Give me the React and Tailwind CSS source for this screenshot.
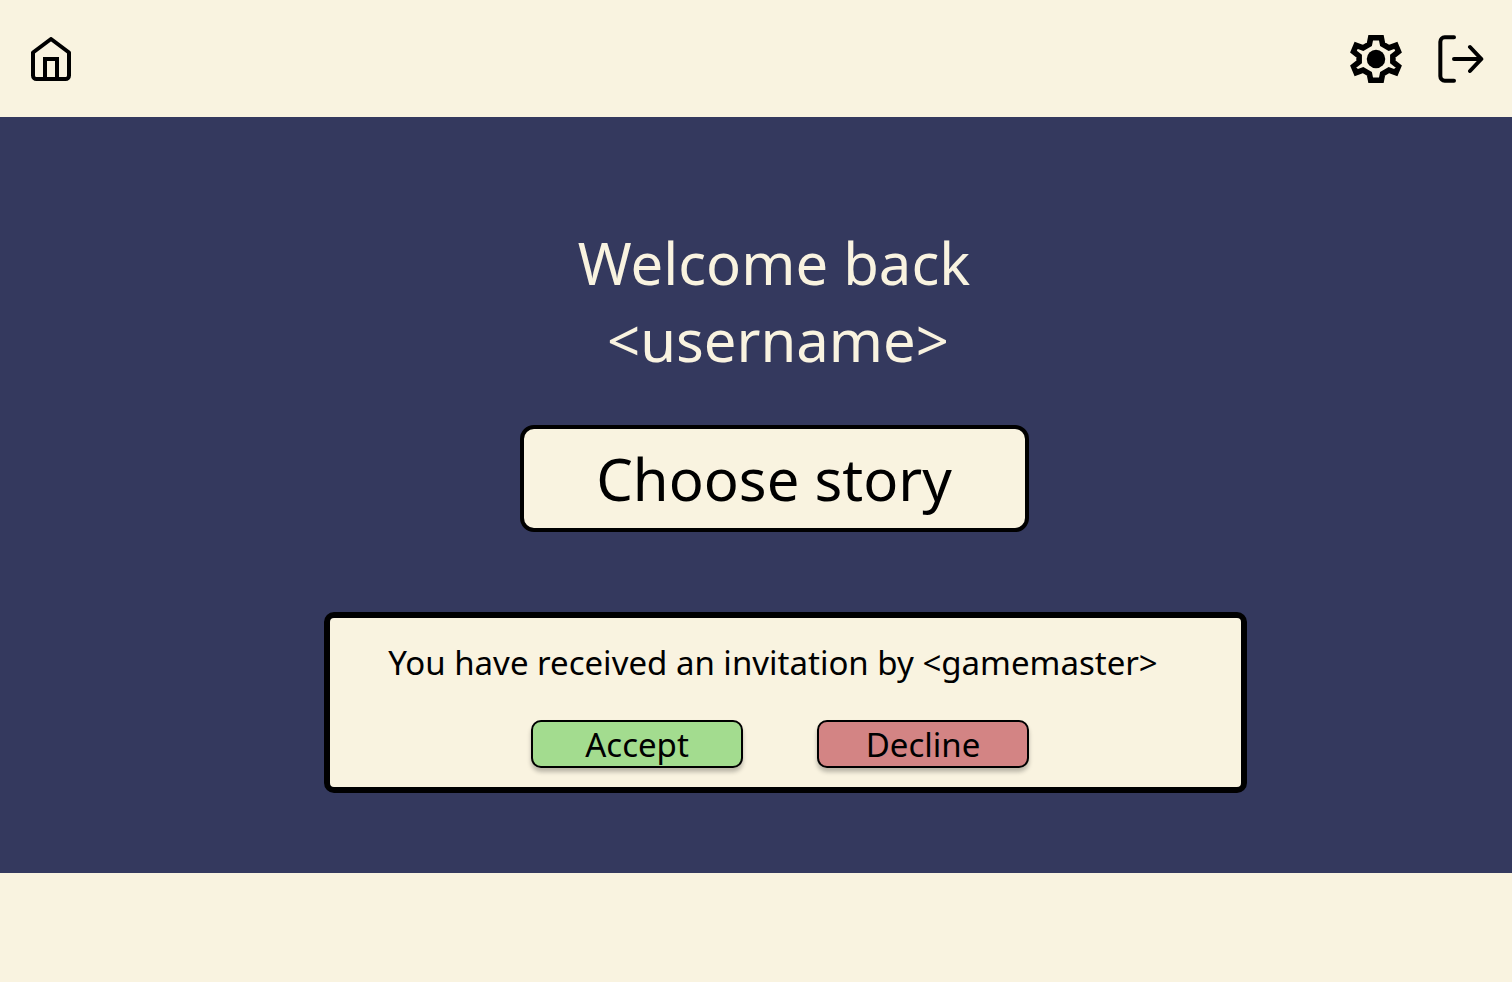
function HomeIcon() {
  return (
    <svg width="40" height="44" viewBox="31 37 40 44" fill="none" stroke="black" strokeWidth="4" strokeLinejoin="round" aria-hidden="true">
      <path d="M51 39 33 52.500V75.500A3.500 3.500 0 0 0 36.500 79H65.500A3.500 3.500 0 0 0 69 75.500V52.500Z" />
      <path d="M45 79V59H57V79" strokeLinejoin="miter" />
    </svg>
  );
}

function GearIcon() {
  return (
    <svg width="52" height="48" viewBox="30 29 156 145" aria-hidden="true">
      <path
        d="M92 37H124L128 57 147 68 168 60 176 79 159 93V110L176 124 168 143 147 135 128 146 124 166H92L88 146 69 135 48 143 40 124 57 110V93L40 79 48 60 69 68 88 57Z"
        fill="none"
        stroke="black"
        strokeWidth="17"
      />
      <circle cx="108" cy="101.500" r="28" />
    </svg>
  );
}

function LogoutIcon() {
  return (
    <svg width="46" height="48" viewBox="38 30 138 144" fill="none" stroke="black" strokeWidth="12" strokeLinecap="round" strokeLinejoin="round" aria-hidden="true">
      <path d="M86 37H58A13 13 0 0 0 45 50V154A13 13 0 0 0 58 167H86" />
      <path d="M86 102H168M134 66 168 102 134 138" />
    </svg>
  );
}

function InviteButton({ children, className }) {
  return (
    <button
      type="button"
      className={`flex h-12 w-[212px] items-center justify-center rounded-[10px] border-2 border-black text-[33px] leading-none shadow-[0_4px_4px_rgba(0,0,0,0.25)] ${className}`}
    >
      {children}
    </button>
  );
}

export default function App() {
  return (
    <div className="flex min-h-screen flex-col bg-[#f9f3e0] font-['Noto_Sans',sans-serif] text-black">
      <header className="flex h-[117px] items-center justify-between pr-7 pl-[31px]">
        <a href="#home" aria-label="Home">
          <HomeIcon />
        </a>
        <div className="flex items-center gap-9">
          <button type="button" aria-label="Settings">
            <GearIcon />
          </button>
          <button type="button" aria-label="Log out">
            <LogoutIcon />
          </button>
        </div>
      </header>

      <main className="flex flex-1 flex-col items-center bg-[#34395e] pt-[107px] pb-20 pl-9">
        <h1 className="text-center text-[58px] leading-[77px] text-[#f9f3e0]">
          Welcome back
          <span className="block pl-2">&lt;username&gt;</span>
        </h1>
        <button
          type="button"
          className="mt-[47px] flex h-[107px] w-[509px] max-w-full items-center justify-center rounded-[14px] border-4 border-black bg-[#f9f3e0] text-[58px] leading-none"
        >
          Choose story
        </button>
        <section className="mt-20 ml-[22px] flex w-[923px] flex-col items-center rounded-[10px] border-[6px] border-black bg-[#f9f3e0] pt-5 pr-6 pb-[19px]">
          <p className="text-[33px] leading-[50px]">
            You have received an invitation by &lt;gamemaster&gt;
          </p>
          <div className="mt-8 ml-[14px] flex gap-[74px]">
            <InviteButton className="bg-[#a3dc8f]">Accept</InviteButton>
            <InviteButton className="bg-[#d38484]">Decline</InviteButton>
          </div>
        </section>
      </main>

      <footer className="h-[109px]" />
    </div>
  );
}
